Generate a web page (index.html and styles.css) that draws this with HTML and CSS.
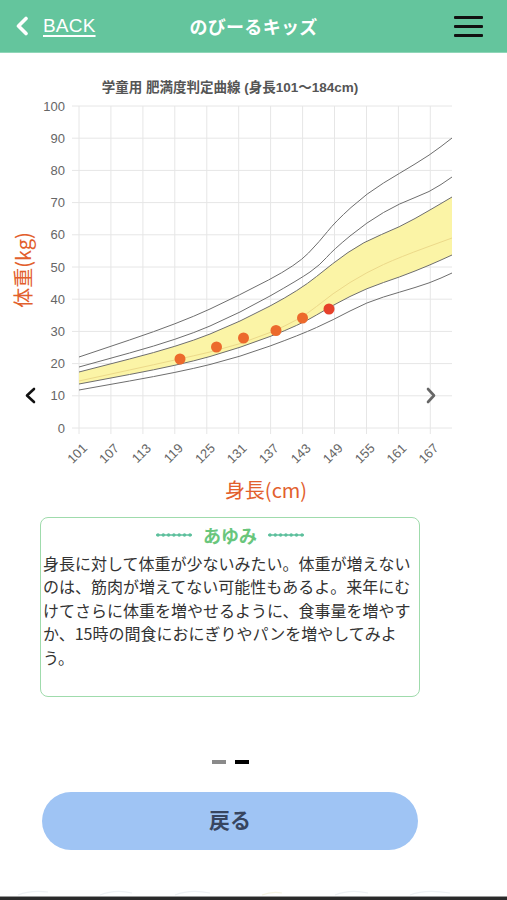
FILE: index.html
```html
<!DOCTYPE html>
<html lang="ja">
<head>
<meta charset="utf-8">
<title>のびーるキッズ</title>
<link rel="stylesheet" href="styles.css">
</head>
<body>
<div class="page">
  <header class="topbar">
    <a class="back">
      <svg class="back-icon" width="14" height="20" viewBox="0 0 14 20"><polyline points="11,2.5 3.5,10 11,17.5" fill="none" stroke="#fff" stroke-width="3.6" stroke-linecap="round" stroke-linejoin="round"/></svg>
      <span class="back-text">BACK</span>
    </a>
    <div class="title">のびーるキッズ</div>
    <div class="menu">
      <span class="bar"></span><span class="bar"></span><span class="bar"></span>
    </div>
  </header>

  <svg class="chart" width="507" height="457" viewBox="0 53 507 457">
    <text class="chart-title" x="230" y="91.5" text-anchor="middle">学童用 肥満度判定曲線 (身長101〜184cm)</text>
    <g class="grid">
      <line x1="72" y1="428" x2="452" y2="428"/>
      <line x1="72" y1="395.8" x2="452" y2="395.8"/>
      <line x1="72" y1="363.6" x2="452" y2="363.6"/>
      <line x1="72" y1="331.4" x2="452" y2="331.4"/>
      <line x1="72" y1="299.2" x2="452" y2="299.2"/>
      <line x1="72" y1="267" x2="452" y2="267"/>
      <line x1="72" y1="234.8" x2="452" y2="234.8"/>
      <line x1="72" y1="202.6" x2="452" y2="202.6"/>
      <line x1="72" y1="170.4" x2="452" y2="170.4"/>
      <line x1="72" y1="138.2" x2="452" y2="138.2"/>
      <line x1="72" y1="106" x2="452" y2="106"/>
      <line x1="79" y1="106" x2="79" y2="434"/>
      <line x1="110.9" y1="106" x2="110.9" y2="434"/>
      <line x1="142.9" y1="106" x2="142.9" y2="434"/>
      <line x1="174.8" y1="106" x2="174.8" y2="434"/>
      <line x1="206.8" y1="106" x2="206.8" y2="434"/>
      <line x1="238.7" y1="106" x2="238.7" y2="434"/>
      <line x1="270.6" y1="106" x2="270.6" y2="434"/>
      <line x1="302.6" y1="106" x2="302.6" y2="434"/>
      <line x1="334.5" y1="106" x2="334.5" y2="434"/>
      <line x1="366.5" y1="106" x2="366.5" y2="434"/>
      <line x1="398.4" y1="106" x2="398.4" y2="434"/>
      <line x1="430.3" y1="106" x2="430.3" y2="434"/>
    </g>
    <g class="ylabels" text-anchor="end">
      <text x="65" y="432.5">0</text>
      <text x="65" y="400.3">10</text>
      <text x="65" y="368.1">20</text>
      <text x="65" y="335.9">30</text>
      <text x="65" y="303.7">40</text>
      <text x="65" y="271.5">50</text>
      <text x="65" y="239.3">60</text>
      <text x="65" y="207.1">70</text>
      <text x="65" y="174.9">80</text>
      <text x="65" y="142.7">90</text>
      <text x="65" y="110.5">100</text>
    </g>
    <g class="xlabels" text-anchor="end">
      <text x="88" y="449" transform="rotate(-45 88 449)">101</text>
      <text x="119.9" y="449" transform="rotate(-45 119.9 449)">107</text>
      <text x="151.9" y="449" transform="rotate(-45 151.9 449)">113</text>
      <text x="183.8" y="449" transform="rotate(-45 183.8 449)">119</text>
      <text x="215.8" y="449" transform="rotate(-45 215.8 449)">125</text>
      <text x="247.7" y="449" transform="rotate(-45 247.7 449)">131</text>
      <text x="279.6" y="449" transform="rotate(-45 279.6 449)">137</text>
      <text x="311.6" y="449" transform="rotate(-45 311.6 449)">143</text>
      <text x="343.5" y="449" transform="rotate(-45 343.5 449)">149</text>
      <text x="375.5" y="449" transform="rotate(-45 375.5 449)">155</text>
      <text x="407.4" y="449" transform="rotate(-45 407.4 449)">161</text>
      <text x="439.3" y="449" transform="rotate(-45 439.3 449)">167</text>
    </g>

    <path class="band" d="M79,372 L129.5,359 Q180,346 210,334 Q240,322 270,306 Q300,290 316.5,276.5 Q333,263 348,252.5 Q363,242 381.5,234.5 Q400,227 415,218.5 Q430,210 441,203.5 L452,197 L452,255 L441,260 Q430,265 415,271 Q400,277 383.5,282.5 Q367,288 350,296.5 Q333,305 316.5,315 Q300,325 270,336.5 Q240,348 210,356.5 Q180,365 129.5,374.5 L79,384 Z"/>
    <path class="median" d="M79,381 L129.5,370 Q180,359 210,352 Q240,345 270,332.5 Q300,320 316.5,306.5 Q333,293 350,282.5 Q367,272 383.5,264.5 Q400,257 426,247.5 L452,238"/>
    <path class="curve" d="M79,357 L129.5,340 Q180,323 210,309 Q240,295 268.5,280 Q297,265 308.5,253 Q320,241 327.5,231.5 Q335,222 351,207.5 Q367,193 383.5,183 Q400,173 415,164 Q430,155 441,146.5 L452,138"/>
    <path class="curve" d="M79,367 L129.5,353 Q180,339 210,326 Q240,313 270,296 Q300,279 310,272 Q320,265 326.5,257.5 Q333,250 350,236 Q367,222 383.5,212.5 Q400,203 415,197.5 Q430,192 441,184.5 L452,177"/>
    <path class="curve" d="M79,372 L129.5,359 Q180,346 210,334 Q240,322 270,306 Q300,290 316.5,276.5 Q333,263 348,252.5 Q363,242 381.5,234.5 Q400,227 415,218.5 Q430,210 441,203.5 L452,197"/>
    <path class="curve" d="M79,384 L129.5,374.5 Q180,365 210,356.5 Q240,348 270,336.5 Q300,325 316.5,315 Q333,305 350,296.5 Q367,288 383.5,282.5 Q400,277 415,271 Q430,265 441,260 L452,255"/>
    <path class="curve" d="M79,390 L129.5,381 Q180,372 210,364.5 Q240,357 270,346 Q300,335 316.5,327.5 Q333,320 350,311 Q367,302 383.5,297 Q400,292 415,287.5 Q430,283 441,278 L452,273"/>

    <g class="dots">
      <circle cx="180" cy="359" r="5.5"/>
      <circle cx="216.5" cy="347" r="5.5"/>
      <circle cx="243.5" cy="338" r="5.5"/>
      <circle cx="276" cy="330.5" r="5.5"/>
      <circle cx="302.5" cy="318" r="5.5"/>
      <circle class="last" cx="329" cy="309" r="5.5"/>
    </g>

    <polyline class="nav-prev" points="34,389 27,395.5 34,402" />
    <polyline class="nav-next" points="428,389 434,395.5 428,402" />

    <text class="axis-title" x="22" y="270" text-anchor="middle" dominant-baseline="central" transform="rotate(-90 22 270)">体重(kg)</text>
    <text class="axis-title" x="266" y="497.5" text-anchor="middle">身長(cm)</text>
  </svg>

  <section class="advice">
    <div class="advice-head">
      <svg class="deco" width="36" height="6" viewBox="0 0 36 6"><line x1="0" y1="3" x2="36" y2="3"/><circle cx="2" cy="3" r="1.7"/><circle cx="7.3" cy="3" r="1.7"/><circle cx="12.6" cy="3" r="1.7"/><circle cx="17.9" cy="3" r="1.7"/><circle cx="23.2" cy="3" r="1.7"/><circle cx="28.5" cy="3" r="1.7"/><circle cx="34" cy="3" r="1.7"/></svg>
      <span class="advice-name">あゆみ</span>
      <svg class="deco" width="36" height="6" viewBox="0 0 36 6"><line x1="0" y1="3" x2="36" y2="3"/><circle cx="2" cy="3" r="1.7"/><circle cx="7.3" cy="3" r="1.7"/><circle cx="12.6" cy="3" r="1.7"/><circle cx="17.9" cy="3" r="1.7"/><circle cx="23.2" cy="3" r="1.7"/><circle cx="28.5" cy="3" r="1.7"/><circle cx="34" cy="3" r="1.7"/></svg>
    </div>
    <p class="advice-text">身長に対して体重が少ないみたい。体重が増えないのは、筋肉が増えてない可能性もあるよ。来年にむけてさらに体重を増やせるように、食事量を増やすか、15時の間食におにぎりやパンを増やしてみよう。</p>
  </section>

  <div class="pager">
    <span class="dash"></span>
    <span class="dash active"></span>
  </div>

  <button class="back-button">戻る</button>

  <footer class="footer">
    <svg class="footer-deco" width="507" height="46" viewBox="0 0 507 46">
      <path d="M18,45 Q30,40 48,42" />
      <path d="M100,45 Q115,39 132,43" />
      <path d="M175,45 Q190,39 210,43" />
      <path d="M262,45 Q272,41 282,43" class="y"/>
      <path d="M335,45 Q350,39 368,43" />
      <path d="M410,45 Q425,39 450,43" />
    </svg>
    <div class="bottom-bar"></div>
  </footer>
</div>
</body>
</html>
```

FILE: styles.css
```css
* {
  box-sizing: border-box;
}

html, body {
  margin: 0;
  padding: 0;
  background: #ffffff;
}

body {
  font-family: "Noto Sans CJK JP", "Noto Sans", sans-serif;
  color: #333;
}

.page {
  width: 507px;
  height: 900px;
  overflow: hidden;
}

/* header */
.topbar {
  display: grid;
  grid-template-columns: 1fr auto 1fr;
  align-items: center;
  height: 53px;
  background: #64c59d;
  border-bottom: 1px solid #8fd6b8;
}

.back {
  display: flex;
  align-items: center;
  padding-left: 15px;
  color: #fff;
}

.back-icon {
  display: block;
}

.back-text {
  margin-left: 14px;
  font-family: "Liberation Sans", Arial, sans-serif;
  font-size: 19px;
  text-decoration: underline;
  text-underline-offset: 3px;
  text-decoration-thickness: 1.5px;
  letter-spacing: 0.2px;
}

.title {
  font-size: 18px;
  font-weight: 700;
  color: #fff;
  letter-spacing: 0.3px;
}

.menu {
  justify-self: end;
  display: flex;
  flex-direction: column;
  gap: 6px;
  padding-right: 24px;
}

.bar {
  display: block;
  width: 29px;
  height: 3px;
  background: #111;
  border-radius: 1px;
}

/* chart */
.chart {
  display: block;
}

.chart-title {
  font-family: "Liberation Sans", "Noto Sans CJK JP", sans-serif;
  font-size: 13.5px;
  font-weight: 700;
  fill: #555;
}

.grid line {
  stroke: #e6e6e6;
  stroke-width: 1;
}

.ylabels text,
.xlabels text {
  font-family: "Liberation Sans", Arial, sans-serif;
  font-size: 13px;
  fill: #666;
}

.band {
  fill: #fbf4a6;
  stroke: none;
}

.median {
  fill: none;
  stroke: #ecd98a;
  stroke-width: 1;
}

.curve {
  fill: none;
  stroke: #6e6e6e;
  stroke-width: 1;
}

.dots circle {
  fill: #ec6a2c;
}

.dots .last {
  fill: #e6412a;
}

.nav-prev,
.nav-next {
  fill: none;
  stroke-width: 2.6;
  stroke-linecap: round;
  stroke-linejoin: round;
}

.nav-prev {
  stroke: #111;
}

.nav-next {
  stroke: #666;
}

.axis-title {
  font-family: "Noto Sans CJK JP", "Liberation Sans", sans-serif;
  font-size: 20px;
  fill: #e2602d;
}

/* advice box */
.advice {
  margin: 7px 0 0 40px;
  width: 380px;
  height: 180px;
  border: 1.5px solid #9fdbac;
  border-radius: 8px;
  padding: 5px 2px 0 2px;
}

.advice-head {
  display: flex;
  align-items: center;
  justify-content: center;
  gap: 11px;
  height: 24px;
}

.deco {
  display: block;
}

.deco line {
  stroke: #5cbf9c;
  stroke-width: 1.4;
}

.deco circle {
  fill: #5cbf9c;
}

.advice-name {
  font-size: 18px;
  font-weight: 700;
  color: #69c67c;
  line-height: 24px;
}

.advice-text {
  margin: 5px 0 0 0;
  font-size: 16px;
  line-height: 23.4px;
  color: #333;
}

/* pager */
.pager {
  display: flex;
  justify-content: center;
  gap: 9px;
  width: 461px;
  margin-top: 63px;
}

.dash {
  display: block;
  width: 14px;
  height: 4px;
  background: #8a8a8a;
}

.dash.active {
  background: #000;
}

/* button */
.back-button {
  display: block;
  margin: 28px 0 0 42px;
  width: 376px;
  height: 58px;
  border: none;
  border-radius: 29px;
  background: #9fc4f4;
  font-family: "Noto Sans CJK JP", sans-serif;
  font-size: 21px;
  font-weight: 700;
  color: #37455f;
  padding: 0 0 4px 0;
}

/* footer */
.footer {
  display: flex;
  flex-direction: column;
}

.footer-deco {
  display: block;
}

.footer-deco path {
  fill: none;
  stroke: #eef1f4;
  stroke-width: 1.2;
}

.footer-deco path.y {
  stroke: #f5f3e2;
}

.bottom-bar {
  height: 4px;
  background: #2a2a2a;
  border-top: 1px solid #999;
}
```
